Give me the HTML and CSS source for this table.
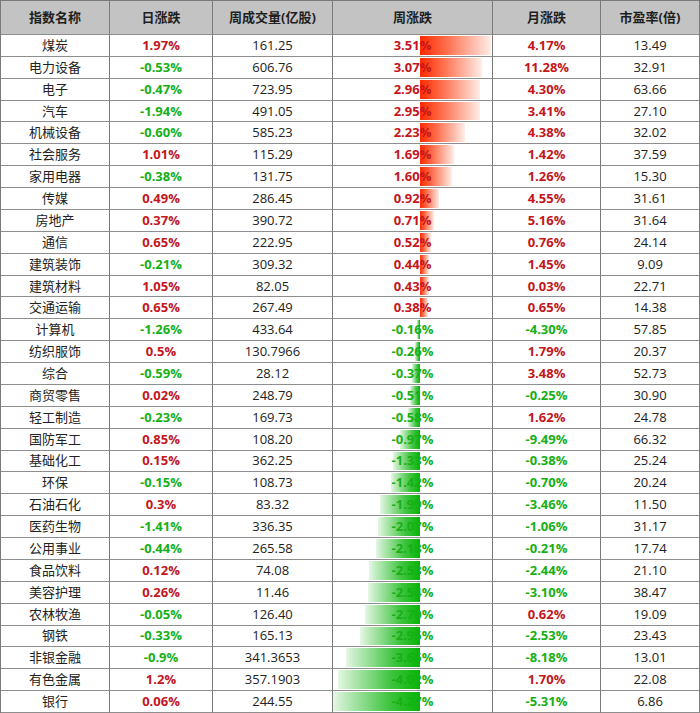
FILE: index.html
```html
<!DOCTYPE html>
<html lang="zh-CN">
<head>
<meta charset="utf-8">
<title>申万一级行业涨跌</title>
<link rel="stylesheet" href="styles.css">
</head>
<body>
<div class="table">
  <div class="th">指数名称</div><div class="th">日涨跌</div><div class="th">周成交量(亿股)</div><div class="th">周涨跌</div><div class="th">月涨跌</div><div class="th">市盈率(倍)</div>

  <div class="td">煤炭</div><div class="td up">1.97%</div><div class="td">161.25</div><div class="td wk"><span class="bar pos" style="--w:71px"></span><span class="val up">3.51%</span></div><div class="td up">4.17%</div><div class="td">13.49</div>
  <div class="td">电力设备</div><div class="td dn">-0.53%</div><div class="td">606.76</div><div class="td wk"><span class="bar pos" style="--w:62px"></span><span class="val up">3.07%</span></div><div class="td up">11.28%</div><div class="td">32.91</div>
  <div class="td">电子</div><div class="td dn">-0.47%</div><div class="td">723.95</div><div class="td wk"><span class="bar pos" style="--w:60px"></span><span class="val up">2.96%</span></div><div class="td up">4.30%</div><div class="td">63.66</div>
  <div class="td">汽车</div><div class="td dn">-1.94%</div><div class="td">491.05</div><div class="td wk"><span class="bar pos" style="--w:60px"></span><span class="val up">2.95%</span></div><div class="td up">3.41%</div><div class="td">27.10</div>
  <div class="td">机械设备</div><div class="td dn">-0.60%</div><div class="td">585.23</div><div class="td wk"><span class="bar pos" style="--w:45px"></span><span class="val up">2.23%</span></div><div class="td up">4.38%</div><div class="td">32.02</div>
  <div class="td">社会服务</div><div class="td up">1.01%</div><div class="td">115.29</div><div class="td wk"><span class="bar pos" style="--w:34px"></span><span class="val up">1.69%</span></div><div class="td up">1.42%</div><div class="td">37.59</div>
  <div class="td">家用电器</div><div class="td dn">-0.38%</div><div class="td">131.75</div><div class="td wk"><span class="bar pos" style="--w:32px"></span><span class="val up">1.60%</span></div><div class="td up">1.26%</div><div class="td">15.30</div>
  <div class="td">传媒</div><div class="td up">0.49%</div><div class="td">286.45</div><div class="td wk"><span class="bar pos" style="--w:19px"></span><span class="val up">0.92%</span></div><div class="td up">4.55%</div><div class="td">31.61</div>
  <div class="td">房地产</div><div class="td up">0.37%</div><div class="td">390.72</div><div class="td wk"><span class="bar pos" style="--w:14px"></span><span class="val up">0.71%</span></div><div class="td up">5.16%</div><div class="td">31.64</div>
  <div class="td">通信</div><div class="td up">0.65%</div><div class="td">222.95</div><div class="td wk"><span class="bar pos" style="--w:11px"></span><span class="val up">0.52%</span></div><div class="td up">0.76%</div><div class="td">24.14</div>
  <div class="td">建筑装饰</div><div class="td dn">-0.21%</div><div class="td">309.32</div><div class="td wk"><span class="bar pos" style="--w:9px"></span><span class="val up">0.44%</span></div><div class="td up">1.45%</div><div class="td">9.09</div>
  <div class="td">建筑材料</div><div class="td up">1.05%</div><div class="td">82.05</div><div class="td wk"><span class="bar pos" style="--w:9px"></span><span class="val up">0.43%</span></div><div class="td up">0.03%</div><div class="td">22.71</div>
  <div class="td">交通运输</div><div class="td up">0.65%</div><div class="td">267.49</div><div class="td wk"><span class="bar pos" style="--w:8px"></span><span class="val up">0.38%</span></div><div class="td up">0.65%</div><div class="td">14.38</div>
  <div class="td">计算机</div><div class="td dn">-1.26%</div><div class="td">433.64</div><div class="td wk"><span class="bar neg" style="--w:3px"></span><span class="val dn">-0.16%</span></div><div class="td dn">-4.30%</div><div class="td">57.85</div>
  <div class="td">纺织服饰</div><div class="td up">0.5%</div><div class="td">130.7966</div><div class="td wk"><span class="bar neg" style="--w:5px"></span><span class="val dn">-0.26%</span></div><div class="td up">1.79%</div><div class="td">20.37</div>
  <div class="td">综合</div><div class="td dn">-0.59%</div><div class="td">28.12</div><div class="td wk"><span class="bar neg" style="--w:8px"></span><span class="val dn">-0.37%</span></div><div class="td up">3.48%</div><div class="td">52.73</div>
  <div class="td">商贸零售</div><div class="td up">0.02%</div><div class="td">248.79</div><div class="td wk"><span class="bar neg" style="--w:10px"></span><span class="val dn">-0.51%</span></div><div class="td dn">-0.25%</div><div class="td">30.90</div>
  <div class="td">轻工制造</div><div class="td dn">-0.23%</div><div class="td">169.73</div><div class="td wk"><span class="bar neg" style="--w:12px"></span><span class="val dn">-0.58%</span></div><div class="td up">1.62%</div><div class="td">24.78</div>
  <div class="td">国防军工</div><div class="td up">0.85%</div><div class="td">108.20</div><div class="td wk"><span class="bar neg" style="--w:20px"></span><span class="val dn">-0.97%</span></div><div class="td dn">-9.49%</div><div class="td">66.32</div>
  <div class="td">基础化工</div><div class="td up">0.15%</div><div class="td">362.25</div><div class="td wk"><span class="bar neg" style="--w:27px"></span><span class="val dn">-1.33%</span></div><div class="td dn">-0.38%</div><div class="td">25.24</div>
  <div class="td">环保</div><div class="td dn">-0.15%</div><div class="td">108.73</div><div class="td wk"><span class="bar neg" style="--w:29px"></span><span class="val dn">-1.42%</span></div><div class="td dn">-0.70%</div><div class="td">20.24</div>
  <div class="td">石油石化</div><div class="td up">0.3%</div><div class="td">83.32</div><div class="td wk"><span class="bar neg" style="--w:40px"></span><span class="val dn">-1.99%</span></div><div class="td dn">-3.46%</div><div class="td">11.50</div>
  <div class="td">医药生物</div><div class="td dn">-1.41%</div><div class="td">336.35</div><div class="td wk"><span class="bar neg" style="--w:42px"></span><span class="val dn">-2.07%</span></div><div class="td dn">-1.06%</div><div class="td">31.17</div>
  <div class="td">公用事业</div><div class="td dn">-0.44%</div><div class="td">265.58</div><div class="td wk"><span class="bar neg" style="--w:44px"></span><span class="val dn">-2.18%</span></div><div class="td dn">-0.21%</div><div class="td">17.74</div>
  <div class="td">食品饮料</div><div class="td up">0.12%</div><div class="td">74.08</div><div class="td wk"><span class="bar neg" style="--w:51px"></span><span class="val dn">-2.53%</span></div><div class="td dn">-2.44%</div><div class="td">21.10</div>
  <div class="td">美容护理</div><div class="td up">0.26%</div><div class="td">11.46</div><div class="td wk"><span class="bar neg" style="--w:52px"></span><span class="val dn">-2.54%</span></div><div class="td dn">-3.10%</div><div class="td">38.47</div>
  <div class="td">农林牧渔</div><div class="td dn">-0.05%</div><div class="td">126.40</div><div class="td wk"><span class="bar neg" style="--w:55px"></span><span class="val dn">-2.70%</span></div><div class="td up">0.62%</div><div class="td">19.09</div>
  <div class="td">钢铁</div><div class="td dn">-0.33%</div><div class="td">165.13</div><div class="td wk"><span class="bar neg" style="--w:60px"></span><span class="val dn">-2.95%</span></div><div class="td dn">-2.53%</div><div class="td">23.43</div>
  <div class="td">非银金融</div><div class="td dn">-0.9%</div><div class="td">341.3653</div><div class="td wk"><span class="bar neg" style="--w:74px"></span><span class="val dn">-3.65%</span></div><div class="td dn">-8.18%</div><div class="td">13.01</div>
  <div class="td">有色金属</div><div class="td up">1.2%</div><div class="td">357.1903</div><div class="td wk"><span class="bar neg" style="--w:82px"></span><span class="val dn">-4.02%</span></div><div class="td up">1.70%</div><div class="td">22.08</div>
  <div class="td">银行</div><div class="td up">0.06%</div><div class="td">244.55</div><div class="td wk"><span class="bar neg" style="--w:87px"></span><span class="val dn">-4.27%</span></div><div class="td dn">-5.31%</div><div class="td">6.86</div>
</div>
</body>
</html>
```

FILE: styles.css
```css
html, body {
  margin: 0;
  padding: 0;
  background: #ffffff;
}

body {
  font-family: "Open Sans", "Noto Sans CJK SC", sans-serif;
  font-size: 13px;
  color: #222222;
}

.table {
  display: grid;
  grid-template-columns: 109px 103px 120px 160px 108px 99px;
  grid-template-rows: 34px repeat(31, 1fr);
  width: 700px;
  height: 713px;
  box-sizing: border-box;
  border-left: 1px solid #7a7a7a;
  border-top: 1px solid #7a7a7a;
}

.th,
.td {
  box-sizing: border-box;
  border-right: 1px solid #7a7a7a;
  border-bottom: 1px solid #8e8e8e;
  display: flex;
  align-items: center;
  justify-content: center;
  white-space: nowrap;
  line-height: 1;
}

.th {
  background: #c3c3c3;
  font-weight: 700;
  color: #1e1e1e;
  font-size: 13px;
}

.td {
  background: #ffffff;
}

.up {
  color: #c4161c;
  font-weight: 700;
}

.dn {
  color: #16b016;
  font-weight: 700;
}

.wk {
  position: relative;
}

.bar {
  position: absolute;
  top: 1px;
  bottom: 1px;
  width: var(--w);
}

.bar.pos {
  left: 87px;
  background: linear-gradient(to right, #ff2a00 0%, #ff6a48 35%, #ffd9cf 90%, #ffeee8 100%);
}

.bar.neg {
  right: calc(100% - 87px);
  background: linear-gradient(to left, #06b406 0%, #3ec43e 35%, #c9eec9 90%, #e6f7e6 100%);
}

.val {
  position: relative;
}
```
